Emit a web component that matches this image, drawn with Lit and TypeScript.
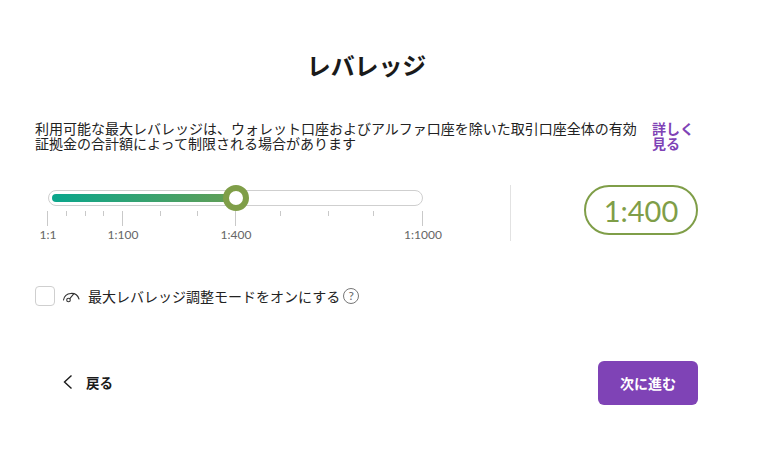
import { LitElement, html, css, svg } from "lit";
import { customElement } from "lit/decorators.js";

const ORIGIN = 47.5;
const MAJOR = [
  { x: 47.5, label: "1:1" },
  { x: 122.5, label: "1:100" },
  { x: 235.5, label: "1:400" },
  { x: 422.5, label: "1:1000" },
];
const MINOR = [66.5, 85.5, 103.5, 160.5, 197.5, 280.5, 328.5, 373.5];

@customElement("app-root")
export class AppRoot extends LitElement {
  static styles = css`
    :host {
      display: block;
      width: 760px;
      height: 453px;
      box-sizing: border-box;
      background: #fff;
      color: #1a1a1a;
      font-family: Lato, "Noto Sans CJK JP", sans-serif;
      overflow: hidden;
    }
    .page {
      width: 735px;
      box-sizing: border-box;
      padding: 49px 37px 0 35px;
      display: flex;
      flex-direction: column;
    }
    h1 {
      margin: 0 -37px 0 -35px;
      padding-right: 2px;
      font-size: 24px;
      line-height: 34px;
      font-weight: 700;
      text-align: center;
      letter-spacing: -0.1px;
    }
    .info {
      margin-top: 38px;
      display: flex;
      align-items: flex-start;
      justify-content: space-between;
      font-size: 14px;
      line-height: 15px;
    }
    .info p { margin: 0; width: 606px; flex: none; color: #222; }
    .info a {
      width: 46px;
      flex: none;
      color: #7f43b6;
      font-weight: 700;
      text-decoration: none;
    }
    .leverage {
      margin-top: 34px;
      height: 56px;
      display: flex;
      align-items: flex-start;
    }
    .slider { position: relative; width: 475px; height: 56px; flex: none; }
    .track {
      position: absolute;
      left: 13px;
      top: 5px;
      width: 375px;
      height: 16px;
      box-sizing: border-box;
      border: 1px solid #cfcfcf;
      border-radius: 8px;
      background: #fff;
    }
    .fill {
      position: absolute;
      left: 17px;
      top: 9px;
      width: 186px;
      height: 8px;
      border-radius: 4px;
      background: linear-gradient(90deg, #0aa68c, #649e54);
    }
    .thumb {
      position: absolute;
      left: 188px;
      top: 0;
      width: 26px;
      height: 26px;
      box-sizing: border-box;
      border: 6px solid #7f9e48;
      border-radius: 50%;
      background: #fff;
    }
    .tick { position: absolute; top: 26px; width: 1px; background: #c9c9c9; }
    .tick.major { height: 15px; }
    .tick.minor { height: 5px; }
    .label {
      position: absolute;
      top: 43px;
      font-size: 12px;
      line-height: 14px;
      color: #666;
      transform: translateX(-50%);
      white-space: nowrap;
    }
    .divider { width: 1px; height: 56px; background: #e2e2e2; flex: none; }
    .pill {
      margin-left: 73px;
      width: 114px;
      height: 50px;
      box-sizing: border-box;
      border: 2px solid #7f9e48;
      border-radius: 25px;
      display: flex;
      align-items: center;
      justify-content: center;
      color: #7f9e48;
      font-size: 29px;
      font-weight: 400;
    }
    .mode {
      margin-top: 45px;
      height: 20px;
      display: flex;
      align-items: center;
      font-size: 14px;
      color: #222;
    }
    .box {
      width: 20px;
      height: 20px;
      box-sizing: border-box;
      border: 1px solid #cfcfcf;
      border-radius: 4px;
      flex: none;
    }
    .gauge { margin-left: 7px; flex: none; }
    .mode span { margin-left: 8px; white-space: nowrap; }
    .help {
      margin-left: 3px;
      width: 16px;
      height: 16px;
      box-sizing: border-box;
      border: 1px solid #777;
      border-radius: 50%;
      display: flex;
      align-items: center;
      justify-content: center;
      font-size: 12px;
      line-height: 1;
      color: #666;
      flex: none;
    }
    .actions {
      margin-top: 55px;
      display: flex;
      align-items: center;
      justify-content: space-between;
    }
    .back {
      margin-bottom: 2px;
      display: flex;
      align-items: center;
      gap: 13px;
      padding-left: 27px;
      font-size: 13.5px;
      font-weight: 700;
    }
    .next {
      width: 100px;
      height: 44px;
      border-radius: 6px;
      background: #7f43b6;
      color: #fff;
      font-size: 14px;
      font-weight: 700;
      display: flex;
      align-items: center;
      justify-content: center;
    }
  `;

  render() {
    return html`
      <div class="page">
        <h1>レバレッジ</h1>
        <div class="info">
          <p>利用可能な最大レバレッジは、ウォレット口座およびアルファ口座を除いた取引口座全体の有効証拠金の合計額によって制限される場合があります</p>
          <a href="#">詳しく見る</a>
        </div>
        <div class="leverage">
          <div class="slider">
            <div class="track"></div>
            <div class="fill"></div>
            ${MINOR.map(
              (x) => html`<i class="tick minor" style="left:${x - ORIGIN + 12}px"></i>`
            )}
            ${MAJOR.map(
              (m) => html`
                <i class="tick major" style="left:${m.x - ORIGIN + 12}px"></i>
                <span class="label" style="left:${m.x - ORIGIN + 13}px">${m.label}</span>
              `
            )}
            <div class="thumb"></div>
          </div>
          <div class="divider"></div>
          <div class="pill">1:400</div>
        </div>
        <div class="mode">
          <div class="box"></div>
          <svg class="gauge" width="18" height="16" viewBox="0 0 18 16" fill="none" stroke="#333" stroke-width="1.1" stroke-linecap="round">
            ${svg`<path d="M1.5 12A8 8 0 0 1 17 11"/>
            <circle cx="6.5" cy="12" r="1.8"/>
            <path d="M7.8 10.7 L11.5 6.2"/>`}
          </svg>
          <span>最大レバレッジ調整モードをオンにする</span>
          <div class="help">?</div>
        </div>
        <div class="actions">
          <div class="back">
            <svg width="11" height="16" viewBox="0 0 11 16" fill="none" stroke="#1a1a1a" stroke-width="1.4">
              <path d="M9.5 1.5 L2.5 8 L9.5 14.5"/>
            </svg>
            戻る
          </div>
          <div class="next">次に進む</div>
        </div>
      </div>
    `;
  }
}
